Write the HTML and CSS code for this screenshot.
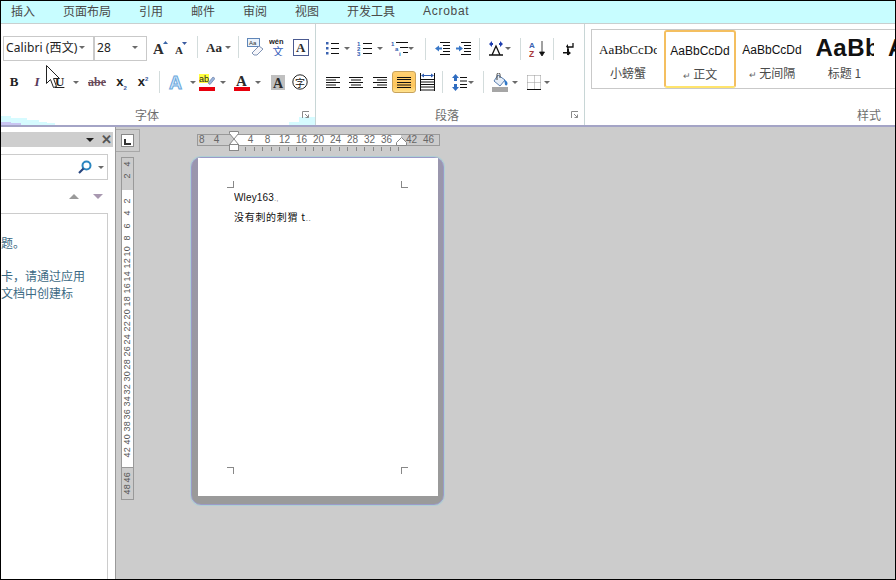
FILE: index.html
```html
<!DOCTYPE html>
<html lang="zh">
<head>
<meta charset="utf-8">
<title>Word</title>
<link rel="stylesheet" href="styles.css">
</head>
<body>
<div class="app">
  <nav class="tabs">
    <span>插入</span><span>页面布局</span><span>引用</span><span>邮件</span><span>审阅</span><span>视图</span><span>开发工具</span><span>Acrobat</span>
  </nav>

  <section class="ribbon">
    <svg class="blot blot-a" width="54" height="12" viewBox="0 0 54 12"><path fill="#d6fbff" d="M0 3h10v2h16v2h12v2h8v1h8v2H0z"/><path fill="#c9c6f2" d="M0 9h10v1h10v2H0z"/></svg>
    <svg class="blot blot-b" width="30" height="12" viewBox="0 0 30 12"><path fill="#d6fbff" d="M14 4h16v8H4v-3h10z"/></svg>

    <div class="group g-font">
      <div class="row fr1">
        <div class="combo"><span class="combo-text">Calibri (西文)</span><i class="caret"></i></div>
        <div class="combo"><span class="combo-text">28</span><i class="caret"></i></div>
        <svg class="ic nudge-r" width="16" height="15" viewBox="0 0 16 15"><text x="0" y="14" class="t-serif-b" font-size="15">A</text><path fill="#3a66a8" d="M10 4l2.500-3 2.500 3z"/></svg>
        <svg class="ic" width="13" height="13" viewBox="0 0 13 13"><text x="0" y="12.500" class="t-serif-b" font-size="11">A</text><path fill="#3a5aa0" d="M7 1h5L9.500 4z"/></svg>
        <i class="sep"></i>
        <div class="split gap-aa"><svg width="17" height="12" viewBox="0 0 17 12"><text x="0" y="11" class="t-serif-b" font-size="13">Aa</text></svg><i class="caret"></i></div>
        <i class="sep"></i>
        <svg class="ic" width="17" height="18" viewBox="0 0 17 18"><rect x=".5" y=".5" width="12" height="8" fill="#eaf2fb" stroke="#5f86b8"/><text x="2" y="7" font-size="6" class="t-sans" fill="#333">Aa</text><path d="M5 15l7-7 4 3-6 6H7z" fill="#f6f6fa" stroke="#7f93b5"/></svg>
        <svg class="ic" width="18" height="18" viewBox="0 0 18 18"><text x="0" y="6" font-size="7.500" class="t-sans-b" fill="#222">wén</text><text x="3.500" y="17.500" font-size="11" class="t-serif" fill="#2f59b8">文</text></svg>
        <svg class="ic" width="16" height="17" viewBox="0 0 16 17"><rect x=".5" y=".5" width="15" height="16" fill="#fff" stroke="#4a5a90"/><text x="3" y="13" class="t-serif-b" font-size="13">A</text></svg>
      </div>
      <div class="row fr2">
        <span class="fmt fmt-b">B</span>
        <span class="fmt fmt-i">I</span>
        <div class="split gap-u"><span class="fmt fmt-u">U</span><i class="caret"></i></div>
        <span class="fmt fmt-s">abe</span>
        <span class="fmt fmt-x">x<sub>2</sub></span>
        <span class="fmt fmt-x">x<sup>2</sup></span>
        <i class="sep"></i>
        <div class="split gap-a"><svg width="17" height="17" viewBox="0 0 17 17"><text x="1" y="15" class="t-sans-b glow" font-size="18">A</text></svg><i class="caret"></i></div>
        <div class="split gap-h"><svg width="16" height="19" viewBox="0 0 16 19"><rect y="1" width="10" height="9" fill="#ffff40"/><text x="0" y="8.500" class="t-sans" font-size="9" fill="#222">ab</text><path d="M9 10l5-6 2 1.500-5 6z" fill="#9bb6dc" stroke="#6a7ea8" stroke-width=".7"/><rect y="14" width="16" height="4" fill="#e8000c"/></svg><i class="caret"></i></div>
        <div class="split gap-c"><svg width="16" height="19" viewBox="0 0 16 19"><text x="2" y="12.500" class="t-serif-b" font-size="15" fill="#2d4a8c">A</text><rect y="14" width="16" height="4" fill="#e8000c"/></svg><i class="caret"></i></div>
        <svg class="ic" width="14" height="15" viewBox="0 0 14 15"><rect width="14" height="15" fill="#c0c0c0"/><text x="2" y="13" class="t-serif-b" font-size="14">A</text></svg>
        <svg class="ic" width="16" height="16" viewBox="0 0 16 16"><circle cx="8" cy="8" r="7.200" fill="#fff" stroke="#222"/><text x="3" y="12.500" class="t-cjk" font-size="10" fill="#111">字</text></svg>
      </div>
      <div class="glabel lab-font"><span>字体</span>
        <svg class="launch" width="8" height="8" viewBox="0 0 8 8"><path d="M.5 7V.500H7M3 3l3.500 3.500M3.500 6.500h3v-3" fill="none" stroke="#8a8a8a"/></svg>
      </div>
    </div>

    <div class="group g-para">
      <div class="row pr1">
        <div class="split gap-l"><svg width="14" height="15" viewBox="0 0 14 15"><path fill="#3a62b0" d="M1 1h2.500v2.500H1zM1 6h2.500v2.500H1zM1 11h2.500v2.500H1z"/><path stroke="#111" d="M6 2.500h8M6 7.500h8M6 12.500h8"/></svg><i class="caret"></i></div>
        <div class="split gap-l"><svg width="15" height="15" viewBox="0 0 15 15"><text x="0" y="5" class="t-num" font-size="6">1</text><text x="0" y="10" class="t-num" font-size="6">2</text><text x="0" y="15" class="t-num" font-size="6">3</text><path stroke="#111" d="M6 2.500h9M6 7.500h9M6 12.500h9"/></svg><i class="caret"></i></div>
        <div class="split gap-m"><svg width="17" height="15" viewBox="0 0 17 15"><text x="0" y="5" class="t-num" font-size="6">1</text><text x="4" y="10" class="t-num" font-size="6">a</text><text x="8" y="15" class="t-num" font-size="6">i</text><path stroke="#111" d="M5 1.500h12M9 6.500h8M12 11.500h5"/></svg><i class="caret"></i></div>
        <i class="sep"></i>
        <svg class="ic" width="15" height="14" viewBox="0 0 15 14"><path stroke="#111" d="M5 .5h10M8 3.500h7M8 6.500h7M8 9.500h7M5 12.500h10"/><path fill="#3a78c8" d="M0 6.500l4-3v2h3v2H4v2z"/></svg>
        <svg class="ic" width="15" height="14" viewBox="0 0 15 14"><path stroke="#111" d="M5 .5h10M8 3.500h7M8 6.500h7M8 9.500h7M5 12.500h10"/><path fill="#3a78c8" d="M7 6.500l-4-3v2H0v2h3v2z"/></svg>
        <i class="sep"></i>
        <div class="split gap-t"><svg width="16" height="15" viewBox="0 0 16 15"><path d="M1 14h14M4 14L8 5l4 9" fill="none" stroke="#111" stroke-width="1.300"/><path fill="#1f3fb0" d="M1 3l3-3v2h1v2H4v2zM15 3l-3-3v2h-1v2h1v2z"/></svg><i class="caret"></i></div>
        <i class="sep"></i>
        <svg class="ic" width="17" height="16" viewBox="0 0 17 16"><text x="0" y="7" class="t-sans-b" font-size="8" fill="#3a62b0">A</text><text x="0" y="15.500" class="t-sans-b" font-size="8.500" fill="#a83a3a">Z</text><path d="M13 0v13M10.500 11l2.500 4 2.500-4z" fill="#111" stroke="#111" stroke-width=".8"/></svg>
        <i class="sep"></i>
        <svg class="ic" width="11" height="14" viewBox="0 0 11 14"><path d="M10 1v4H5M5 5V8" fill="none" stroke="#111" stroke-width="1.300"/><path fill="#111" d="M5 2v5L3 4.500zM0 10h6v1.500H0zM5 8.500l3 2.500-3 2.500zM4 7h2v6H4z"/></svg>
      </div>
      <div class="row pr2">
        <svg class="ic" width="14" height="11" viewBox="0 0 14 11"><path stroke="#111" d="M0 .5h14M0 3h10M0 5.500h14M0 8h10M0 10.500h14"/></svg>
        <svg class="ic" width="14" height="11" viewBox="0 0 14 11"><path stroke="#111" d="M0 .5h14M2 3h10M0 5.500h14M2 8h10M0 10.500h14"/></svg>
        <svg class="ic" width="14" height="11" viewBox="0 0 14 11"><path stroke="#111" d="M0 .5h14M4 3h10M0 5.500h14M4 8h10M0 10.500h14"/></svg>
        <button class="active" type="button"><svg width="14" height="11" viewBox="0 0 14 11"><path stroke="#111" d="M0 .5h14M0 2.500h14M0 5.500h14M0 8h14M0 10.500h14"/></svg></button>
        <svg class="ic" width="15" height="18" viewBox="0 0 15 18"><path stroke="#111" d="M1 6.500h13M1 9h13M1 11.500h13M1 14h13M1 17h13M.5 0v18M14.500 0v18"/><path fill="#2f5cb0" d="M1 2.500l3-2v4zM14 2.500l-3-2v4z"/><path stroke="#2f5cb0" d="M3 2.500h9"/></svg>
        <i class="sep"></i>
        <div class="split gap-ls"><svg width="15" height="17" viewBox="0 0 15 17"><path fill="#2f6cc0" d="M3.500 0L7 4H5v3H2V4H0zM3.500 17L7 13H5v-3H2v3H0z"/><path stroke="#111" d="M8 3.500h7M8 7h7M8 10.500h7M8 13.500h7"/></svg><i class="caret"></i></div>
        <i class="sep"></i>
        <div class="split gap-f"><svg width="16" height="19" viewBox="0 0 16 19"><rect y="14" width="16" height="5" fill="#a6a6a6"/><path d="M6 2l7 5-5 6-6-5z" fill="#e6eef8" stroke="#5a7fb0"/><path d="M5 7V1.500a1.500 1.500 0 013 0V5" fill="none" stroke="#444"/><path fill="#2f78c8" d="M12 7c2 0 3.500 2 3.500 3.500s-1 2-1.500 2-1.500-1-1.200-2.500z"/></svg><i class="caret"></i></div>
        <div class="split gap-g"><svg width="14" height="15" viewBox="0 0 14 15"><path stroke="#999" stroke-dasharray="1 1" fill="none" d="M.5 .5h13M13.500 .5v13M.5 .5v13M7.500 .5v13M.5 7.500h13"/><path stroke="#111" d="M0 14.500h14"/></svg><i class="caret"></i></div>
      </div>
      <div class="glabel lab-para"><span>段落</span>
        <svg class="launch" width="8" height="8" viewBox="0 0 8 8"><path d="M.5 7V.500H7M3 3l3.500 3.500M3.500 6.500h3v-3" fill="none" stroke="#8a8a8a"/></svg>
      </div>
    </div>

    <div class="group g-styles">
      <div class="gallery">
        <div class="style s1"><span class="sample serif">AaBbCcDd</span><span class="sname">小螃蟹</span></div>
        <div class="style s2 current"><span class="sample">AaBbCcDd</span><span class="sname"><b class="ret">↵</b> 正文</span></div>
        <div class="style s3"><span class="sample">AaBbCcDd</span><span class="sname"><b class="ret">↵</b> 无间隔</span></div>
        <div class="style s4"><span class="sample big">AaBb</span><span class="sname">标题 1</span></div>
        <div class="style s5"><span class="sample big">A</span></div>
      </div>
      <div class="glabel lab-style"><span>样式</span></div>
    </div>
  </section>
  <div class="band"></div>

  <main class="main">
    <aside class="pane">
      <div class="pane-head"><i class="pane-menu"></i><span class="pane-x">✕</span></div>
      <div class="search">
        <svg width="14" height="14" viewBox="0 0 14 14"><circle cx="8.500" cy="5.500" r="4" fill="#fff" stroke="#2a86c0" stroke-width="2"/><path d="M1 13l4.500-4.500" stroke="#27457f" stroke-width="2.200"/></svg>
        <i class="caret"></i>
      </div>
      <div class="pane-nav"><i class="up"></i><i class="down"></i></div>
      <div class="pane-list">
        <p class="p1">题。</p>
        <p>卡，请通过应用</p>
        <p>文档中创建标</p>
      </div>
    </aside>

    <div class="work">
      <div class="side">
        <div class="corner"><span class="tabstop"><svg width="7" height="6" viewBox="0 0 7 6"><path d="M0 0h2v4h5v2H0z" fill="#333"/></svg></span></div>
        <div class="vruler">
          <span>4</span><span>2</span><span></span><span>2</span><span>4</span><span>6</span><span>8</span><span>10</span><span>12</span><span>14</span><span>16</span><span>18</span><span>20</span><span>22</span><span>24</span><span>26</span><span>28</span><span>30</span><span>32</span><span>34</span><span>36</span><span>38</span><span>40</span><span>42</span><span></span><span>46</span><span>48</span>
        </div>
      </div>
      <div class="canvas">
        <div class="hruler">
          <div class="hnums"><span class="first">8</span><span>4</span><span></span><span>4</span><span>8</span><span>12</span><span>16</span><span>20</span><span>24</span><span>28</span><span>32</span><span>36</span><span class="half"></span><span>42</span><span>46</span></div>
          <div class="ticks"></div>
          <svg class="marker m-left" width="10" height="20" viewBox="0 0 10 20"><path d="M.5.500h9v2L5 8 .5 2.500zM5 8l4.500 5.500H.5z" fill="#fff" stroke="#888"/><rect x=".5" y="13.500" width="9" height="6" fill="#fff" stroke="#888"/></svg>
          <svg class="marker m-right" width="11" height="9" viewBox="0 0 11 9"><path d="M5.500.5l5 5v3H.5v-3z" fill="#fff" stroke="#888"/></svg>
        </div>
        <div class="frame">
          <div class="page">
            <div class="marks"><i class="mk tl"></i><i class="mk tr"></i></div>
            <div class="body">
              <p class="l1">Wley163<span class="pm">.,</span></p>
              <p class="l2">没有刺的刺猬 t<span class="pm">..</span></p>
            </div>
            <div class="marks"><i class="mk bl"></i><i class="mk br"></i></div>
          </div>
        </div>
      </div>
    </div>
  </main>

  <svg class="pointer" width="14" height="24" viewBox="0 0 14 24"><path d="M.5.500v18l4-4 3 8 3-1-3-8h6z" fill="#fff" stroke="#222"/></svg>
</div>
</body>
</html>
```

FILE: styles.css
```css
* { box-sizing: border-box; }
html, body { margin: 0; padding: 0; background: #ccc; }
body { width: 896px; height: 580px; overflow: hidden; font-family: "Liberation Sans", "Noto Sans CJK SC", sans-serif; }
p { margin: 0; }
i { display: block; font-style: normal; }

.app { position: relative; width: 896px; height: 580px; border: 1px solid #000; display: flex; flex-direction: column; overflow: hidden; background: #ccc; }

.tabs { height: 23px; flex: none; display: flex; gap: 28px; padding: 0 0 3px 10px; align-items: center; background: #c8fdff; border-bottom: 1px solid #c9cfcf; font: 12px/16px "Noto Sans CJK SC", sans-serif; color: #4a4a4a; }
.tabs span:last-child { font-family: "Liberation Sans", sans-serif; letter-spacing: .7px; }

.ribbon { position: relative; height: 101px; flex: none; display: flex; background: #fff; }
.blot { position: absolute; bottom: 0; }
.blot-a { left: 0; }
.blot-b { left: 284px; }
.group { position: relative; display: flex; flex-direction: column; height: 100%; }
.g-font { width: 314px; padding: 12px 0 0 2px; }
.g-para { width: 270px; padding: 12px 0 0 6px; border-left: 1px solid #c8d6d6; border-right: 1px solid #c8d6d6; }
.g-styles { flex: 1; min-width: 0; padding: 5px 0 0 6px; }

.row { display: grid; align-items: center; justify-items: center; }
.fr1 { height: 25px; grid-template-columns: 91px 53px 24px 20px 12px 29px 12px 22px 24px 22px; }
.fr1 > :not(.combo) { margin-bottom: 3px; }
.fr2 { height: 22px; margin-top: 10px; grid-template-columns: 22px 24px 35px 26px 23px 20px 12px 33px 34px 36px 20px 24px; }
.pr1 { height: 25px; grid-template-columns: 32px 35px 30px 12px 22px 21px 10px 31px 10px 24px 8px 22px; }
.pr2 { height: 22px; margin-top: 10px; grid-template-columns: 22px 24px 24px 24px 22px 8px 32px 10px 34px 32px; }

.ic { display: block; }
.nudge-r { margin-left: 3px; }
.sep { width: 1px; height: 22px; background: #d3dcdc; }
.caret { width: 0; height: 0; flex: none; border: 3px solid transparent; border-top: 3px solid #6a6a6a; border-bottom: 0; }
.split { display: flex; align-items: center; width: 100%; justify-content: flex-start; }
.split svg, .split .fmt { flex: none; display: block; }
.gap-aa { padding-left: 3px; gap: 2px; }
.gap-u { padding-left: 6px; gap: 9px; }
.gap-a { padding-left: 3px; gap: 5px; }
.gap-h { padding-left: 1px; gap: 5px; }
.gap-c { padding-left: 2px; gap: 5px; }
.gap-l { padding-left: 3px; gap: 5px; }
.gap-m { padding-left: 2px; gap: 0; }
.gap-t { padding-left: 4px; gap: 1px; }
.gap-ls { padding-left: 6px; gap: 1px; }
.gap-f { padding-left: 4px; gap: 4px; }
.gap-g { padding-left: 5px; gap: 3px; }

.combo { width: 100%; height: 25px; display: flex; align-items: center; justify-content: space-between; padding: 0 8px 3px 2px; border: 1px solid #c9c9c9; background: #fff; font-size: 12px; color: #222; overflow: hidden; }
.combo-text { white-space: nowrap; overflow: hidden; width: 73px; font-family: "Noto Sans", "Noto Sans CJK SC", sans-serif; letter-spacing: .1px; }

.t-serif-b { font-family: "Liberation Serif", serif; font-weight: 700; fill: #2b2b2b; }
.t-serif { font-family: "Noto Sans CJK SC", serif; }
.t-sans { font-family: "Liberation Sans", sans-serif; }
.t-sans-b { font-family: "Liberation Sans", sans-serif; font-weight: 700; }
.t-cjk { font-family: "Noto Sans CJK SC", sans-serif; }
.t-num { font-family: "Liberation Sans", sans-serif; font-weight: 700; fill: #2f5cb0; }
.glow { fill: #cfe6fb; stroke: #6aa8dc; stroke-width: 1; }

.fmt { font-family: "Liberation Serif", serif; font-weight: 700; font-size: 13px; line-height: 16px; color: #222; }
.fmt-i { font-style: italic; color: #5a3a5a; }
.fmt-u { text-decoration: underline; }
.fmt-s { text-decoration: line-through; color: #6a4a5a; font-size: 12px; }
.fmt-x { font-family: "Liberation Sans", sans-serif; }
.fmt-x sub, .fmt-x sup { font-size: 6px; color: #3a5aa0; line-height: 0; }

.active { width: 24px; height: 22px; padding: 0; display: flex; align-items: center; justify-content: center; border: 1px solid #c8a25a; border-radius: 3px; background: linear-gradient(#ffd071, #ffc65c 70%, #ffe38f); }

.glabel { margin-top: auto; height: 18px; padding-bottom: 3px; display: flex; align-items: center; font: 12px/15px "Noto Sans CJK SC", sans-serif; color: #6e6e6e; }
.lab-font { margin-left: 132px; }
.lab-para { margin-left: 113px; }
.lab-style { margin-left: 266px; }
.launch { margin-left: auto; margin-right: 5px; }

.gallery { height: 60px; display: flex; border: 1px solid #c9c9c9; border-right: 0; overflow: hidden; }
.style { flex: none; width: 72px; height: 100%; display: flex; flex-direction: column; align-items: center; overflow: hidden; padding-top: 10px; }
.s4 { width: 73px; padding-top: 4px; }
.s5 { width: 30px; padding-top: 4px; align-items: flex-start; padding-left: 7px; }
.current { height: 58px; border: 2px solid #f4bf60; border-bottom-color: #ffe46c; border-radius: 3px; padding-top: 9px; }
.sample { display: block; height: 20px; font-size: 12px; line-height: 20px; color: #111; white-space: nowrap; }
.s1 .sample { width: 58px; overflow: hidden; }
.serif { font-family: "Liberation Serif", serif; font-size: 13px; }
.big { font-size: 24px; line-height: 28px; height: 28px; font-weight: 700; letter-spacing: .5px; }
.s4 .sample { width: 58px; overflow: hidden; }
.s4 .sname { margin-top: 3px; }
.sname { margin-top: 5px; font: 12px/15px "Noto Sans CJK SC", sans-serif; color: #4a4a4a; white-space: nowrap; }
.ret { font-weight: 400; font-size: 9px; color: #666; }

.band { height: 2px; flex: none; background: #a4a4c6; }

.main { flex: 1; min-height: 0; display: flex; }
.pane { width: 115px; flex: none; display: flex; flex-direction: column; background: #fff; border-right: 1px solid #999; padding-top: 5px; }
.pane-head { height: 15px; width: 112px; flex: none; background: #cecece; display: flex; align-items: center; justify-content: flex-end; gap: 7px; padding-right: 1px; }
.pane-menu { width: 0; height: 0; border: 4px solid transparent; border-top: 4px solid #222; border-bottom: 0; }
.pane-x { font-size: 13px; line-height: 13px; font-weight: 700; color: #555; }
.search { height: 26px; width: 107px; margin-top: 7px; flex: none; display: flex; align-items: center; justify-content: flex-end; gap: 6px; padding-right: 3px; border: 1px solid #ccc; border-left: 0; background: #fff; }
.pane-nav { height: 33px; width: 107px; flex: none; display: flex; gap: 14px; justify-content: flex-end; align-items: center; padding: 0 5px 0 0; }
.pane-nav .up { width: 0; height: 0; border: 5px solid transparent; border-bottom: 5px solid #9a9a9a; border-top: 0; }
.pane-nav .down { width: 0; height: 0; border: 5px solid transparent; border-top: 5px solid #a898b0; border-bottom: 0; }
.pane-list { flex: 1; width: 107px; border-top: 1px solid #ccc; border-right: 1px solid #ccc; padding-top: 20px; font: 12px/17px "Noto Sans CJK SC", sans-serif; color: #3c6a84; white-space: nowrap; }
.pane-list .p1 { margin-bottom: 16px; }

.work { flex: 1; min-width: 0; display: flex; background: #ccc; }
.side { width: 24px; flex: none; padding-top: 2px; }
.corner { height: 23px; width: 24px; display: flex; align-items: center; justify-content: center; border: 1px solid #a8a8a8; border-left: 0; }
.tabstop { width: 13px; height: 13px; background: #fff; border: 1px solid #888; display: flex; align-items: flex-end; justify-content: center; padding-bottom: 1px; }
.vruler { width: 13px; height: 343px; margin: 5px 0 0 5px; border: 1px solid #999; background: linear-gradient(#ccc 32px, #fff 32px, #fff 309px, #999 309px, #999 310px, #ccc 310px); overflow: hidden; }
.vruler span { display: block; height: 12.550px; width: 11px; font-size: 9px; line-height: 11px; letter-spacing: .3px; text-align: center; color: #555; white-space: nowrap; writing-mode: vertical-rl; transform: rotate(180deg); }
.vruler span:first-child { height: 11.550px; }

.canvas { margin-left: 51px; width: 253px; position: relative; }
.hruler { position: relative; height: 23px; margin: 7px 0 0 6px; width: 243px; }
.hnums { height: 12px; display: flex; border: 1px solid #999; background: linear-gradient(90deg, #ccc 35px, #fff 35px, #fff 203px, #ccc 203px); font-size: 10px; line-height: 10px; color: #666; }
.hnums span { width: 17px; flex: none; text-align: center; }
.hnums .first { width: 10px; text-align: left; padding-left: 1px; }
.hnums .half { width: 8px; }
.ticks { height: 4px; margin: 1px 0 0 40px; width: 162px; background: repeating-linear-gradient(90deg, #888 0 1px, transparent 1px 8.500px); }
.marker { position: absolute; display: block; }
.m-left { left: 32px; top: -3px; }
.m-right { left: 199px; top: 3px; }

.frame { height: 348px; width: 253px; padding: 0 5px 8px 6px; border: 1px solid #9a9ac8; border-radius: 10px; background: linear-gradient(#9a96ae, #9a9a9a 90%); box-shadow: 0 0 0 1px rgba(140, 210, 220, .45); }
.page { width: 240px; height: 100%; background: #fff; padding: 23px 30px 22px 29px; display: flex; flex-direction: column; }
.marks { display: flex; justify-content: space-between; flex: none; }
.mk { width: 7px; height: 7px; border: 0 solid #888; }
.tl { border-right-width: 1px; border-bottom-width: 1px; }
.tr { border-left-width: 1px; border-bottom-width: 1px; }
.bl { border-right-width: 1px; border-top-width: 1px; }
.br { border-left-width: 1px; border-top-width: 1px; }
.body { flex: 1; padding: 0 0 0 7px; font: 10px/19px "Liberation Sans", "Noto Sans CJK SC", sans-serif; color: #111; }
.l1, .l2 { height: 19px; overflow: hidden; }
.l1 { letter-spacing: .15px; }
.l2 { font-family: "Noto Sans CJK SC", sans-serif; letter-spacing: .7px; }
.pm { font-size: 8px; color: #888; }

.pointer { position: absolute; left: 45px; top: 64px; display: block; }
```
